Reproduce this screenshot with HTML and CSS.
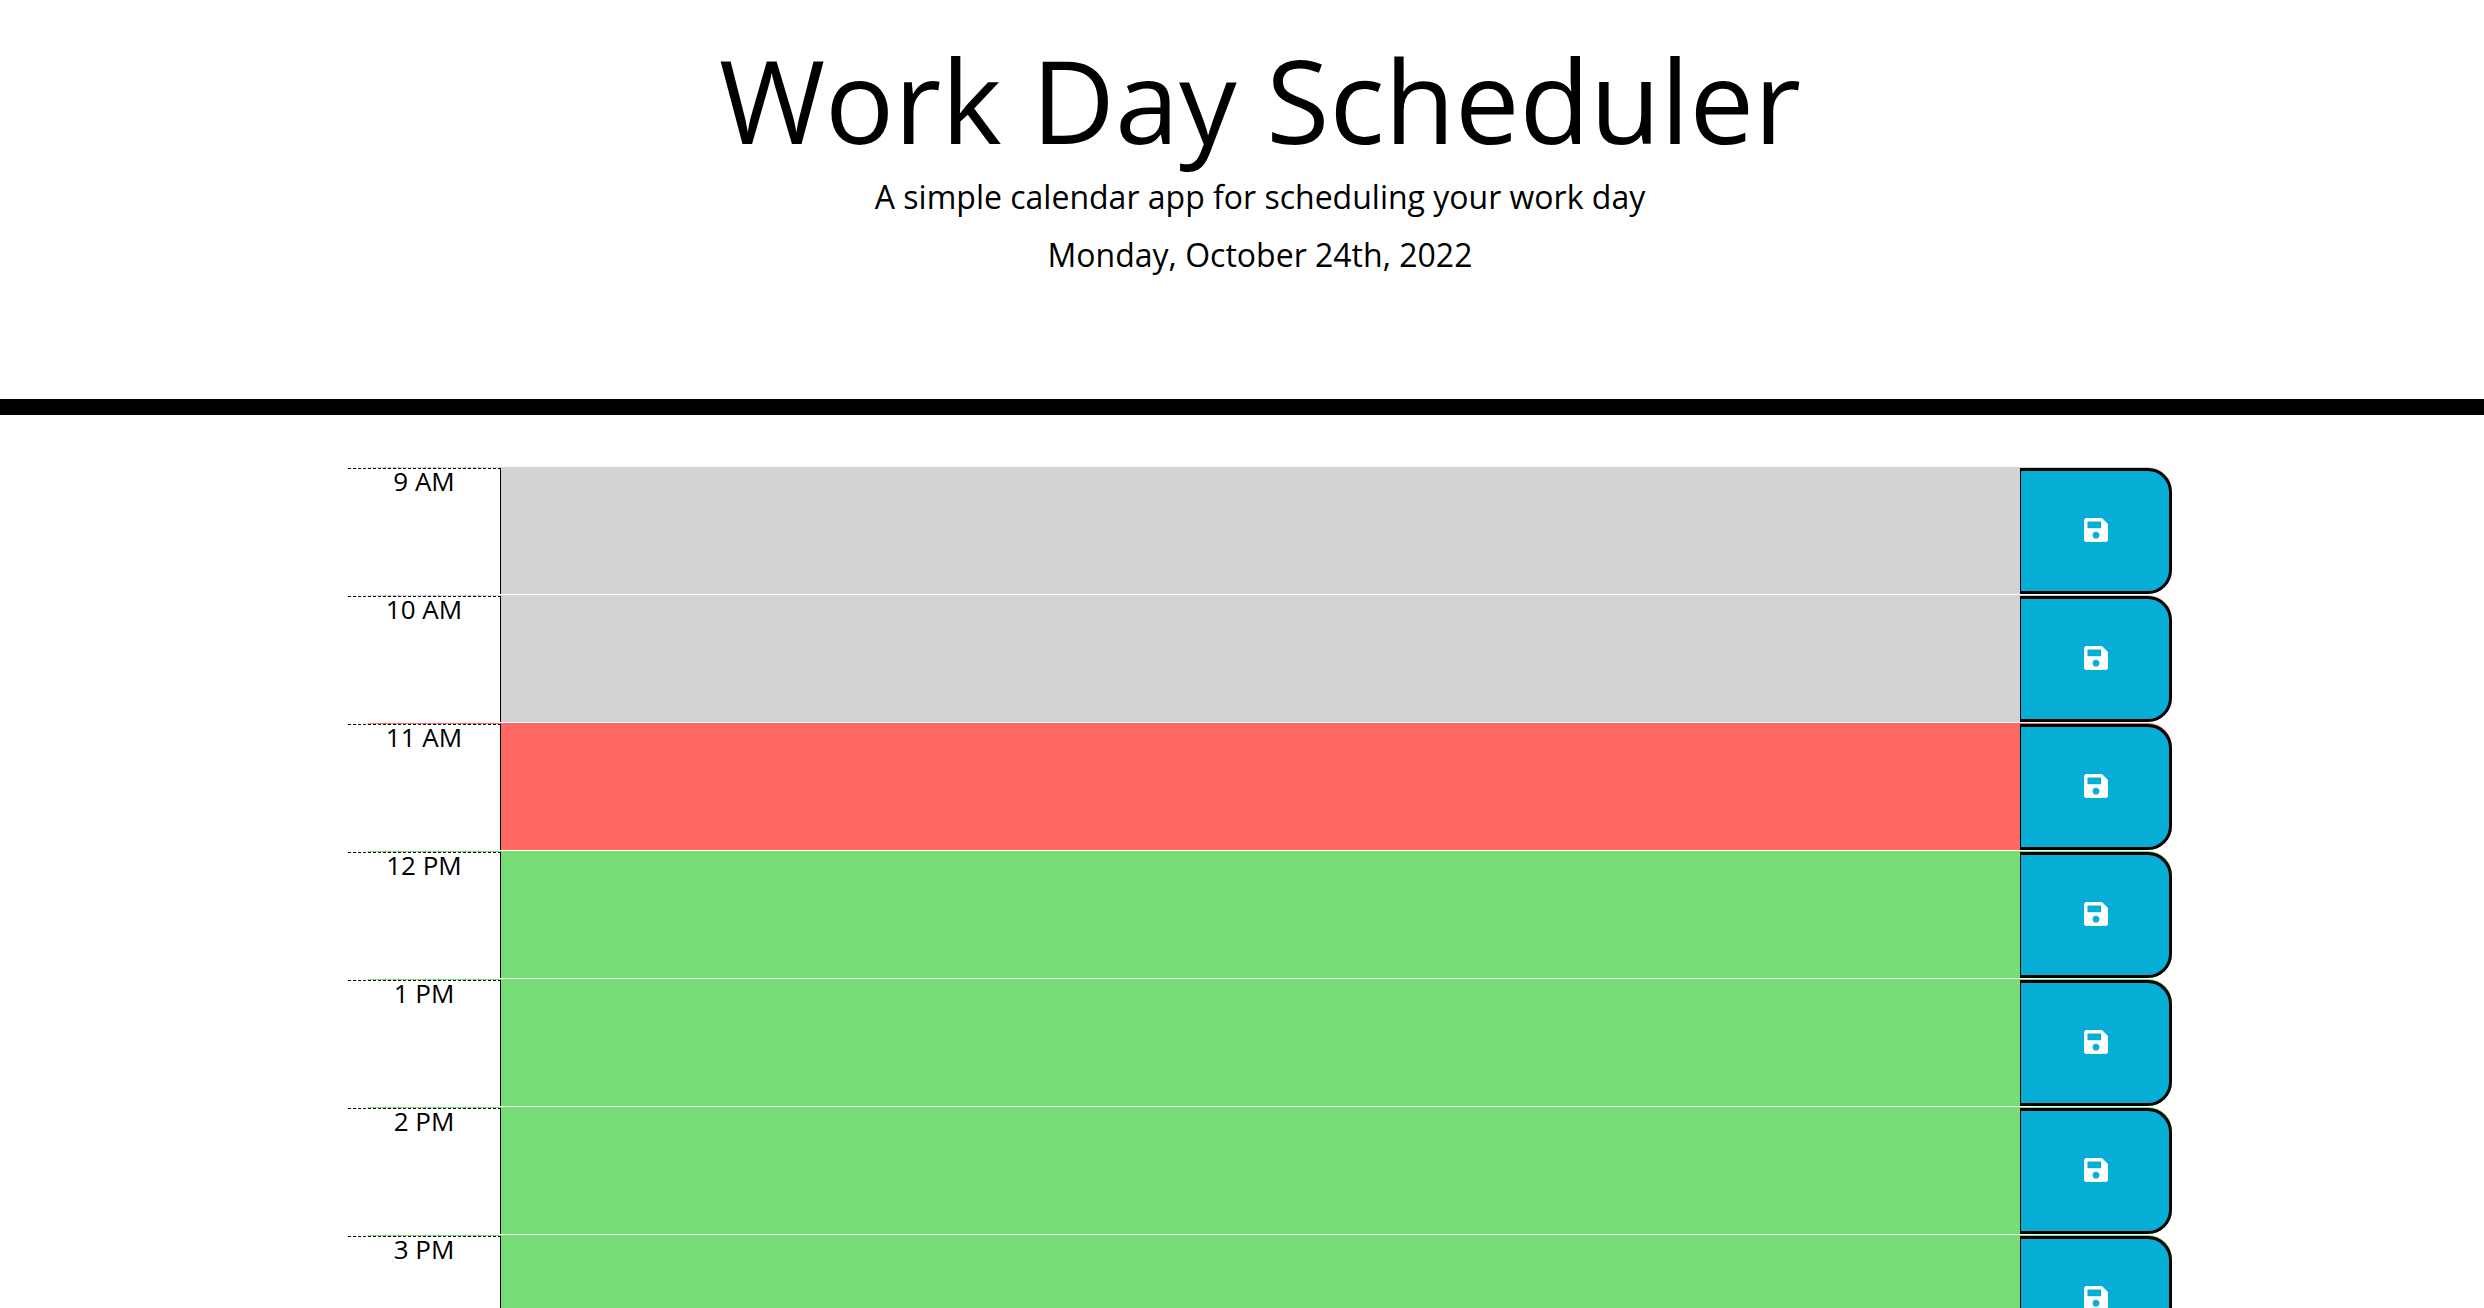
FILE: index.html
```html
<!DOCTYPE html>
<html lang="en">
<head>
  <meta charset="UTF-8">
  <meta name="viewport" content="width=device-width, initial-scale=1">
  <title>Work Day Scheduler</title>
  <link rel="stylesheet" href="styles.css">
</head>
<body>
  <svg class="sprite" aria-hidden="true">
    <symbol id="save" viewBox="0 32 448 448">
      <path d="M433.941 129.941l-83.882-83.882A48 48 0 0 0 316.118 32H48C21.49 32 0 53.49 0 80v352c0 26.51 21.49 48 48 48h352c26.51 0 48-21.49 48-48V163.882a48 48 0 0 0-14.059-33.941zM224 416c-35.346 0-64-28.654-64-64 0-35.346 28.654-64 64-64s64 28.654 64 64c0 35.346-28.654 64-64 64zm96-304.52V212c0 6.627-5.373 12-12 12H76c-6.627 0-12-5.373-12-12V108c0-6.627 5.373-12 12-12h228.52c3.183 0 6.235 1.264 8.485 3.515l3.48 3.48A11.996 11.996 0 0 1 320 111.48z"/>
    </symbol>
  </svg>

  <header class="header">
    <h1 class="title">Work Day Scheduler</h1>
    <p class="lead">A simple calendar app for scheduling your work day</p>
    <p class="lead">Monday, October 24th, 2022</p>
  </header>

  <main class="schedule">
    <div class="container">
      <div class="time-block past">
        <label class="hour" for="hour-9">9 AM</label>
        <textarea class="description" id="hour-9"></textarea>
        <button class="save-btn" type="button" aria-label="Save 9 AM"><svg class="icon"><use href="#save"/></svg></button>
      </div>
      <div class="time-block past">
        <label class="hour" for="hour-10">10 AM</label>
        <textarea class="description" id="hour-10"></textarea>
        <button class="save-btn" type="button" aria-label="Save 10 AM"><svg class="icon"><use href="#save"/></svg></button>
      </div>
      <div class="time-block present">
        <label class="hour" for="hour-11">11 AM</label>
        <textarea class="description" id="hour-11"></textarea>
        <button class="save-btn" type="button" aria-label="Save 11 AM"><svg class="icon"><use href="#save"/></svg></button>
      </div>
      <div class="time-block future">
        <label class="hour" for="hour-12">12 PM</label>
        <textarea class="description" id="hour-12"></textarea>
        <button class="save-btn" type="button" aria-label="Save 12 PM"><svg class="icon"><use href="#save"/></svg></button>
      </div>
      <div class="time-block future">
        <label class="hour" for="hour-13">1 PM</label>
        <textarea class="description" id="hour-13"></textarea>
        <button class="save-btn" type="button" aria-label="Save 1 PM"><svg class="icon"><use href="#save"/></svg></button>
      </div>
      <div class="time-block future">
        <label class="hour" for="hour-14">2 PM</label>
        <textarea class="description" id="hour-14"></textarea>
        <button class="save-btn" type="button" aria-label="Save 2 PM"><svg class="icon"><use href="#save"/></svg></button>
      </div>
      <div class="time-block future">
        <label class="hour" for="hour-15">3 PM</label>
        <textarea class="description" id="hour-15"></textarea>
        <button class="save-btn" type="button" aria-label="Save 3 PM"><svg class="icon"><use href="#save"/></svg></button>
      </div>
    </div>
  </main>
</body>
</html>
```

FILE: styles.css
```css
* {
  box-sizing: border-box;
}

body {
  margin: 0;
  height: 100vh;
  overflow: hidden;
  background: #fff;
  color: #000;
  font-family: "Open Sans", "Noto Sans", sans-serif;
  font-size: 26px;
  line-height: 24px;
}

.sprite {
  display: none;
}

.header {
  padding: 30px 0 110px 36px;
  border-bottom: 16px solid #000;
  text-align: center;
}

.title {
  margin: 0 0 3px;
  font-size: 115px;
  font-weight: 400;
  line-height: 140px;
}

.lead {
  margin: 0 0 10px;
  font-size: 32px;
  line-height: 48px;
}

.schedule {
  padding: 51px 0 0 36px;
}

.container {
  max-width: 1824px;
  margin: 0 auto;
}

.time-block {
  display: grid;
  grid-template-columns: 1fr 10fr 1fr;
  grid-template-rows: 126px;
  margin-top: 1px;
  padding-top: 1px;
  border-radius: 24px;
}

/* The dashed rule above each hour: 3px dashes, 2px gaps */
.hour {
  padding-top: 1px;
  background: #fff repeating-linear-gradient(to right, #000 0 3px, #fff 3px 5px) top / 100% 1px no-repeat;
  text-align: center;
}

.description {
  display: block;
  width: 100%;
  height: 100%;
  margin: 0;
  padding: 8px 16px;
  border: 0;
  border-left: 1px solid #000;
  border-radius: 0;
  background: transparent;
  color: #000;
  font: inherit;
  resize: none;
}

.past,
.past .description {
  background-color: #d3d3d3;
}

.present,
.present .description {
  background-color: #ff6961;
}

.future,
.future .description {
  background-color: #77dd77;
}

.save-btn {
  display: flex;
  align-items: center;
  justify-content: center;
  padding: 0 0 2px 2px;
  border: 3px solid #000;
  border-left-width: 1px;
  border-radius: 0 24px 24px 0;
  background: #06aed5;
  color: #fff;
  cursor: pointer;
}

.icon {
  width: 24px;
  height: 24px;
  fill: currentColor;
}
```
